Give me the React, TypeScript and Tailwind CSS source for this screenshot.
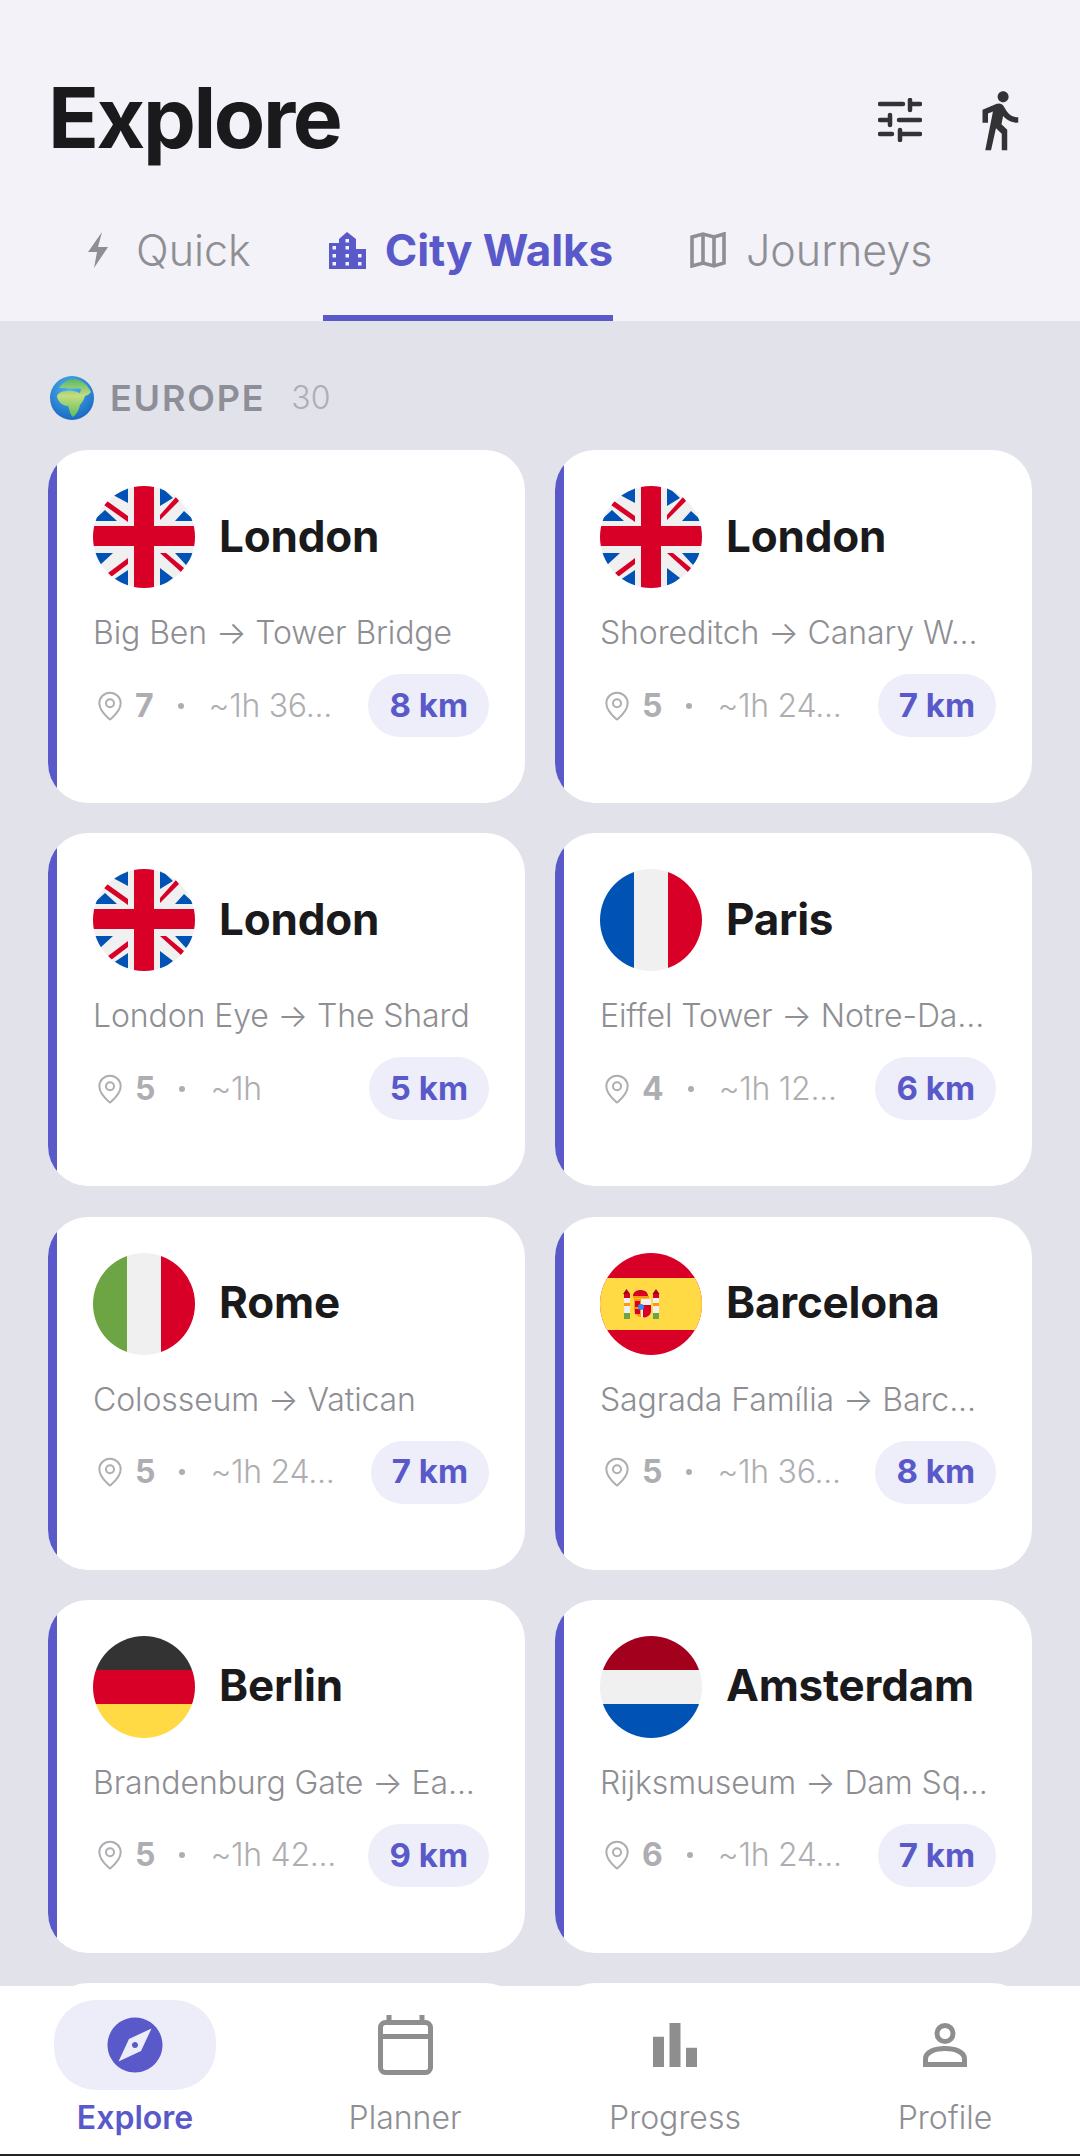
import React from 'react';
import { MapPin } from 'lucide-react';
import { MdDirectionsWalk, MdExplore, MdBarChart } from 'react-icons/md';

type FlagName = 'uk' | 'fr' | 'it' | 'es' | 'de' | 'nl';

interface Walk {
  city: string;
  flag: FlagName;
  route: string;
  stops: number;
  time: string;
  km: number;
}

const walks: Walk[] = [
  { city: 'London', flag: 'uk', route: 'Big Ben → Tower Bridge', stops: 7, time: '~1h 36...', km: 8 },
  { city: 'London', flag: 'uk', route: 'Shoreditch → Canary W...', stops: 5, time: '~1h 24...', km: 7 },
  { city: 'London', flag: 'uk', route: 'London Eye → The Shard', stops: 5, time: '~1h', km: 5 },
  { city: 'Paris', flag: 'fr', route: 'Eiffel Tower → Notre-Da...', stops: 4, time: '~1h 12...', km: 6 },
  { city: 'Rome', flag: 'it', route: 'Colosseum → Vatican', stops: 5, time: '~1h 24...', km: 7 },
  { city: 'Barcelona', flag: 'es', route: 'Sagrada Família → Barc...', stops: 5, time: '~1h 36...', km: 8 },
  { city: 'Berlin', flag: 'de', route: 'Brandenburg Gate → Ea...', stops: 5, time: '~1h 42...', km: 9 },
  { city: 'Amsterdam', flag: 'nl', route: 'Rijksmuseum → Dam Sq...', stops: 6, time: '~1h 24...', km: 7 },
];

function Flag({ name }: { name: FlagName }) {
  return (
    <svg viewBox="0 0 102 102" className="w-[102px] h-[102px] shrink-0">
      <defs>
        <clipPath id={`clip-${name}`}>
          <circle cx="51" cy="51" r="51" />
        </clipPath>
      </defs>
      <g clipPath={`url(#clip-${name})`}>
        {name === 'uk' && (
          <>
            <rect width="102" height="102" fill="#f0f0f0" />
            <path d="M20 9 L35 0 L35 17 Z M67 0 L80 12 L67 20 Z M0 35 L12 24 L24 35 Z M82 35 L91 25 L102 35 Z M0 67 L20 67 L7 79 Z M102 67 L82 67 L93 79 Z M35 84 L35 102 L20 94 Z M67 82 L80 92 L67 102 Z" fill="#0052b4" />
            <path d="M11 19 L14 15 L35 30 L35 36 Z M67 29 L83 11 L86 15 L67 34 Z M15 87 L35 72 L35 78 L18 91 Z M67 67 L73 67 L91 82 L88 86 Z" fill="#d80027" />
            <rect x="41" width="20" height="102" fill="#d80027" />
            <rect y="40" width="102" height="20" fill="#d80027" />
          </>
        )}
        {name === 'fr' && (
          <>
            <rect width="34" height="102" fill="#0052b4" />
            <rect x="34" width="34" height="102" fill="#f0f0f0" />
            <rect x="68" width="34" height="102" fill="#d80027" />
          </>
        )}
        {name === 'it' && (
          <>
            <rect width="34" height="102" fill="#6da544" />
            <rect x="34" width="34" height="102" fill="#f0f0f0" />
            <rect x="68" width="34" height="102" fill="#d80027" />
          </>
        )}
        {name === 'es' && (
          <>
            <rect width="102" height="102" fill="#d80027" />
            <rect y="25" width="102" height="52" fill="#ffda44" />
            {/* pillars */}
            <path d="M26.5 36 L30 41 L23 41 Z" fill="#a2001d" />
            <rect x="24" y="41" width="6" height="4" fill="#d80027" />
            <rect x="24" y="45" width="6" height="15" fill="#f0f0f0" />
            <rect x="24" y="50" width="6" height="3" fill="#ff9811" />
            <rect x="24" y="60" width="6" height="6" fill="#6da544" />
            <path d="M56 36 L59.5 41 L52.5 41 Z" fill="#a2001d" />
            <rect x="53" y="41" width="6" height="4" fill="#d80027" />
            <rect x="53" y="45" width="6" height="15" fill="#f0f0f0" />
            <rect x="53" y="50" width="6" height="3" fill="#ff9811" />
            <rect x="53" y="60" width="6" height="6" fill="#6da544" />
            {/* crown and shield */}
            <path d="M33 43 C33 35 48 35 48 43 Z" fill="#d80027" />
            <rect x="33" y="43" width="16" height="2.5" fill="#ff9811" />
            <path d="M34 46 H41 V64 C37 64 34 61 34 57 Z" fill="#ff9811" />
            <rect x="35" y="48" width="5" height="6" fill="#d80027" />
            <rect x="35" y="56" width="5" height="5" fill="#d80027" />
            <path d="M41 46 H51 V58 C51 62 47 64.5 44 64.5 L41 64 Z" fill="#f0f0f0" />
            <path d="M43 52 H51 V58 C51 62 47 64.5 44 64.5 L43 64 Z" fill="#d80027" />
            <circle cx="41" cy="54" r="3" fill="#338af3" />
          </>
        )}
        {name === 'de' && (
          <>
            <rect width="102" height="34" fill="#333333" />
            <rect y="34" width="102" height="34" fill="#d80027" />
            <rect y="68" width="102" height="34" fill="#ffda44" />
          </>
        )}
        {name === 'nl' && (
          <>
            <rect width="102" height="34" fill="#a2001d" />
            <rect y="34" width="102" height="34" fill="#f0f0f0" />
            <rect y="68" width="102" height="34" fill="#0052b4" />
          </>
        )}
      </g>
    </svg>
  );
}

function WalkCard({ walk }: { walk?: Walk }) {
  return (
    <div className="h-[353px] bg-white rounded-[40px] overflow-hidden flex shrink-0">
      <div className="w-[9px] bg-[#5a59c9] shrink-0" />
      {walk && (
        <div className="flex-1 min-w-0 pl-[36px] pr-[36px] pt-[36px]">
          <div className="flex items-center gap-[24px]">
            <Flag name={walk.flag} />
            <span className="pb-[3px] text-[44px] leading-[54px] font-bold text-[#1a1a1c] tracking-[-0.2px]">{walk.city}</span>
          </div>
          <p className="mt-[25px] text-[32px] leading-[40px] font-light text-[#8e8e93] whitespace-nowrap tracking-[-0.1px]">{walk.route}</p>
          <div className="mt-[21px] flex items-center">
            <MapPin className="w-[32px] h-[32px] text-[#aeaeb2] shrink-0 ml-[1px]" strokeWidth={1.5} />
            <span className="ml-[9px] text-[32px] font-bold text-[#aeaeb2] shrink-0">{walk.stops}</span>
            <span className="ml-[24px] w-[6px] h-[6px] rounded-full bg-[#aeaeb2] shrink-0" />
            <span className="ml-[25px] text-[32px] font-light text-[#aeaeb2] whitespace-nowrap flex-1 min-w-0 tracking-[-0.3px]">{walk.time}</span>
            <span className="shrink-0 h-[63px] px-[21px] rounded-full bg-[#eeeefa] flex items-center text-[33px] font-bold text-[#5a59c9]">{walk.km} km</span>
          </div>
        </div>
      )}
    </div>
  );
}

function Globe() {
  return (
    <svg viewBox="0 0 44 44" className="w-[44px] h-[44px] shrink-0 ml-[2px]">
      <defs>
        <radialGradient id="sea" cx="45%" cy="30%" r="75%">
          <stop offset="0%" stopColor="#4fb4ee" />
          <stop offset="100%" stopColor="#1565c0" />
        </radialGradient>
        <linearGradient id="land" x1="0" y1="0" x2="0" y2="1">
          <stop offset="0%" stopColor="#58b86a" />
          <stop offset="45%" stopColor="#c5dc80" />
          <stop offset="100%" stopColor="#5cbf5a" />
        </linearGradient>
      </defs>
      <circle cx="22" cy="22" r="22" fill="url(#sea)" />
      <path d="M9 12 C13 6 19 3 25 3 C32 4 38 9 41 16 C39 19 37 19 35 20 C34 24 32 26 30 29 C29 33 27 38 23 41 C20 39 20 34 18 30 C13 30 7 25 7 20 C8 16 14 15 17 15 C22 14 27 16 30 17 L31 13 C26 12 20 13 15 12 Z" fill="url(#land)" />
    </svg>
  );
}

function TuneIcon() {
  return (
    <svg viewBox="0 0 44 44" className="w-[44px] h-[44px] text-[#333336]" fill="none" stroke="currentColor" strokeWidth="4.5" strokeLinecap="round">
      <path d="M2 6 H25 M32 2 V12 M32 6 H42" />
      <path d="M2 22 H12 M12 17 V27 M21 22 H42" />
      <path d="M2 36 H14 M22 32 V42 M22 36 H42" />
    </svg>
  );
}

function BoltIcon() {
  return (
    <svg viewBox="0 0 20 36" className="w-[20px] h-[36px] text-[#8e8e93]" fill="currentColor">
      <path d="M14 0 L0 20 H9 L6 36 L20 15 H10 Z" />
    </svg>
  );
}

function BuildingIcon() {
  return (
    <svg viewBox="0 0 37 37" className="w-[37px] h-[37px] text-[#5a59c9]">
      <path fill="currentColor" d="M0 37 V11 H10 V7 L18 0 L27 7 V17 H37 V37 Z" />
      <g fill="#f2f2f8">
        <rect x="16.5" y="7" width="3.5" height="3.5" />
        <rect x="3.5" y="14" width="3.5" height="3.5" />
        <rect x="16.5" y="14" width="3.5" height="3.5" />
        <rect x="3.5" y="22" width="3.5" height="3.5" />
        <rect x="16.5" y="22" width="3.5" height="3.5" />
        <rect x="29" y="22" width="3.5" height="3.5" />
        <rect x="3.5" y="30" width="3.5" height="3.5" />
        <rect x="16.5" y="30" width="3.5" height="3.5" />
        <rect x="29" y="30" width="3.5" height="3.5" />
      </g>
    </svg>
  );
}

function MapFoldIcon() {
  return (
    <svg viewBox="0 0 36 36" className="w-[36px] h-[36px] text-[#8e8e93]" fill="none" stroke="currentColor" strokeWidth="3.6" strokeLinejoin="miter">
      <path d="M2 5 L13 2 L24 5 L34 2 V31 L24 34 L13 31 L2 34 Z" />
      <path d="M13 2 V31 M24 5 V34" />
    </svg>
  );
}

function CalendarIcon() {
  return (
    <svg viewBox="0 0 55 60" className="w-[55px] h-[60px] text-[#8e8e8e]" fill="none" stroke="currentColor" strokeWidth="5">
      <rect x="2.5" y="7.5" width="50" height="50" rx="5" />
      <path d="M2.5 21.5 H52.5" />
      <path d="M11 0 V7 M44 0 V7" />
    </svg>
  );
}

function PersonIcon() {
  return (
    <svg viewBox="0 0 44 44" className="w-[44px] h-[44px] text-[#8e8e8e]" fill="none" stroke="currentColor" strokeWidth="5">
      <circle cx="22" cy="10.5" r="8" />
      <path d="M2.5 41.5 V36 C2.5 29 12 25.5 22 25.5 C32 25.5 41.5 29 41.5 36 V41.5 Z" />
    </svg>
  );
}

function NavItem({ label, active, icon }: { label: string; active?: boolean; icon: React.ReactNode }) {
  return (
    <div className="flex-1 flex flex-col items-center">
      <div className={`w-[162px] h-[90px] rounded-[42px] flex items-center justify-center ${active ? 'bg-[#ecedf9]' : ''}`}>{icon}</div>
      <span className={`mt-[8px] text-[32px] leading-[40px] ${active ? 'font-semibold text-[#5a59c9]' : 'font-light text-[#8e8e93]'}`}>{label}</span>
    </div>
  );
}

export default function App() {
  return (
    <div className="w-[1080px] h-[2156px] flex flex-col overflow-hidden bg-[#e1e2ea] font-['Inter',sans-serif]">
      {/* Header */}
      <header className="h-[321px] shrink-0 bg-[#f2f2f8] flex flex-col">
        <div className="flex items-center justify-between pl-[48px] pr-[48px] pt-[68px]">
          <h1 className="text-[84px] leading-[100px] font-bold text-[#1a1a1c] tracking-[-2.4px]">Explore</h1>
          <div className="flex items-center gap-[44px] pt-[4px]">
            <TuneIcon />
            <MdDirectionsWalk className="w-[66px] h-[66px] text-[#333336]" />
          </div>
        </div>
        <div className="mt-auto flex pl-[88px] h-[106px]">
          <div className="flex items-center gap-[28px] pb-[36px]">
            <BoltIcon />
            <span className="text-[43px] font-light text-[#8e8e93]">Quick</span>
          </div>
          <div className="ml-[72px] flex items-center gap-[19px] border-b-[6px] border-[#5a59c9] pl-[6px] pb-[30px]">
            <BuildingIcon />
            <span className="text-[44px] font-bold text-[#5a59c9] tracking-[-0.1px]">City Walks</span>
          </div>
          <div className="ml-[77px] flex items-center gap-[20px] pb-[36px]">
            <MapFoldIcon />
            <span className="text-[43px] font-light text-[#8e8e93]">Journeys</span>
          </div>
        </div>
      </header>

      {/* List */}
      <div className="flex-1 min-h-0 overflow-hidden px-[48px] pt-[54px]">
        <div className="flex items-center h-[46px]">
          <Globe />
          <span className="ml-[16px] text-[36px] font-semibold tracking-[1.8px] text-[#8e8e98]">EUROPE</span>
          <span className="ml-[26px] text-[32px] font-light text-[#aeaeb6]">30</span>
        </div>
        <div className="mt-[29px] grid grid-cols-2 gap-x-[30px] gap-y-[30.3px]">
          {walks.map((walk, idx) => (
            <WalkCard key={idx} walk={walk} />
          ))}
          <WalkCard />
          <WalkCard />
        </div>
      </div>

      {/* Bottom nav */}
      <nav className="h-[168px] shrink-0 bg-white flex pt-[14px]">
        <NavItem label="Explore" active icon={<MdExplore className="w-[66px] h-[66px] text-[#5a59c9]" />} />
        <NavItem label="Planner" icon={<CalendarIcon />} />
        <NavItem label="Progress" icon={<MdBarChart className="w-[66px] h-[66px] text-[#8e8e8e]" />} />
        <NavItem label="Profile" icon={<PersonIcon />} />
      </nav>
      <div className="h-[2px] shrink-0 bg-[#222222]" />
    </div>
  );
}
